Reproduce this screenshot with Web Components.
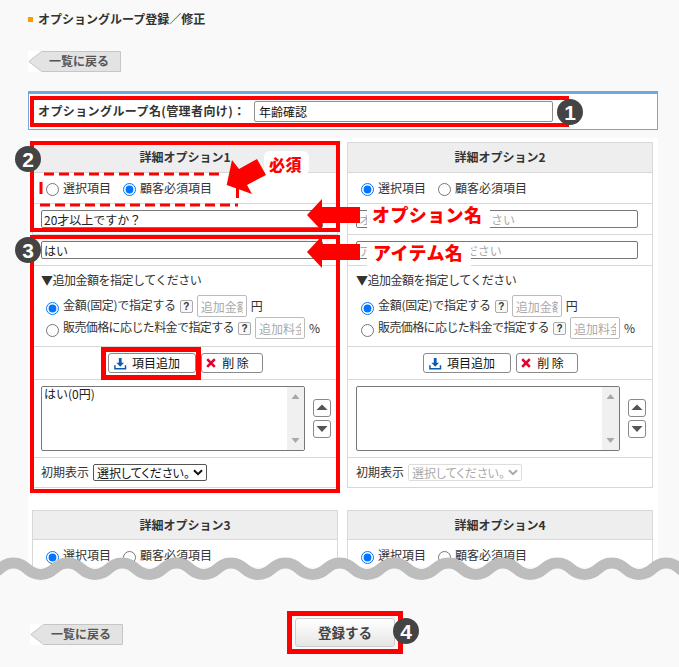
<!DOCTYPE html>
<html lang="ja">
<head>
<meta charset="utf-8">
<title>オプショングループ登録／修正</title>
<style>
  html, body { margin: 0; padding: 0; background: #f9f9f9; }
  body { font: 12px/1.2 "Noto Sans CJK JP", "Liberation Sans", sans-serif; color: #333; }
</style>
</head>
<body>
<x-page>
  <x-title>オプショングループ登録／修正</x-title>
  <x-back>一覧に戻る</x-back>
  <x-namebox label="オプショングループ名(管理者向け)：" value="年齢確認"></x-namebox>
  <x-panel>
    <x-card n="1" mode="required" option="20才以上ですか？" item="はい" list="はい(0円)" enabled></x-card>
    <x-card n="2" ph-option="オプション名を入力ください" ph-item="アイテム名を入力ください"></x-card>
    <x-card n="3" compact></x-card>
    <x-card n="4" compact></x-card>
  </x-panel>
  <x-footer>
    <x-back slot="back">一覧に戻る</x-back>
    <x-submit>登録する</x-submit>
  </x-footer>
  <x-notes></x-notes>
</x-page>
<script>
function define(name, css, html, init) {
  customElements.define(name, class extends HTMLElement {
    connectedCallback() {
      if (this.shadowRoot) return;
      const root = this.attachShadow({ mode: 'open' });
      const a = k => (this.getAttribute(k) || '');
      root.innerHTML = '<style>' + css + '</style>' + (typeof html === 'function' ? html(a, this) : html);
      if (init) init(root, this);
    }
  });
}

define('x-page', `
  :host { display:block; position:relative; width:679px; height:667px; overflow:hidden; box-sizing:border-box; padding-left:28px; }
`, '<slot></slot>');

define('x-title', `
  :host { display:flex; align-items:center; gap:5px; height:39px; width:630px; font-weight:bold; font-size:12px; color:#333; }
  i { width:5px; height:5px; background:#f90; display:block; }
`, '<i></i><slot></slot>');

define('x-back', `
  :host { display:grid; width:93px; height:21px; margin-top:12px; color:#555; font-weight:bold; font-size:12px; }
  svg, span { grid-area:1/1; }
  svg { display:block; }
  span { display:flex; align-items:center; padding-left:21px; }
`, `<svg width="93" height="21" viewBox="0 0 93 21"><rect width="14" height="21" fill="#fff"/><path d="M.8 10.5 13.5.5H92.5v20H13.5z" fill="#e3e3e3" stroke="#c6c6c6"/></svg><span><slot></slot></span>`);

define('x-namebox', `
  :host { display:flex; align-items:center; box-sizing:border-box; width:630px; height:39px; margin-top:19px; padding-left:9px; background:#fff; border:1px solid #6fa8dc; border-top-width:3px; }
  b { width:216px; font-size:12px; color:#333; white-space:nowrap; letter-spacing:.4px; }
  input { box-sizing:border-box; width:299px; height:21px; margin:0; padding:1px 4px; font:inherit; font-size:12px; color:#111; border:1px solid #8f8f8f; border-radius:2px; background:#fff; outline:0; }
`, a => `<b>${a('label')}</b><input value="${a('value')}">`);

define('x-panel', `
  :host { display:grid; grid-template-columns:306px 306px; grid-auto-rows:max-content; column-gap:9px; row-gap:22px; box-sizing:border-box; width:630px; height:429px; margin-top:8px; padding:4px 0 0 4px; background:#fff; overflow:hidden; align-content:start; }
`, '<slot></slot>');

const icoDown = `<svg width="13" height="13" viewBox="0 0 14 14"><path d="M5.2 1h3v5.2h2.6L6.7 10.6 2.6 6.2h2.6z" fill="#0b5cad"/><path d="M1 9v3.6h11.4V9" fill="none" stroke="#0b5cad" stroke-width="1.6"/></svg>`;
const icoX = `<svg width="10" height="10" viewBox="0 0 10 10"><path d="M1.2 1.2l7.6 7.6M8.8 1.2 1.2 8.8" stroke="#e6002d" stroke-width="2.6"/></svg>`;

define('x-card', `
  :host { display:block; box-sizing:border-box; width:306px; border:1px solid #d8d8d8; background:#fff; font-size:12px; color:#333; }
  * { box-sizing:border-box; }
  .row { border-bottom:1px solid #d8d8d8; display:flex; align-items:center; padding:0 8px; }
  .row:last-child { border-bottom:0; }
  .head { height:30px; justify-content:center; background:#eee; font-weight:bold; color:#333; }
  :host([compact]) .head { height:29px; }
  .kind { height:31px; padding-left:13px; }
  .kind label { display:flex; align-items:center; gap:4px; margin-right:12px; width:65px; white-space:nowrap; }
  .kind label + label { width:auto; }
  input[type=radio] { width:13px; height:13px; margin:0; flex:none; position:relative; top:2px; }
  .txt { height:31px; }
  .txt input, .fee input:not([type=radio]) { font:inherit; font-size:12px; margin:0; outline:0; background:#fff; }
  .txt input { width:282px; height:18px; padding:0 2px; color:#222; border:1px solid #777; border-radius:2px; }
  .txt input::placeholder, .fee input::placeholder { color:#aaa; opacity:1; }
  .price { display:block; height:81px; padding:5px 8px 0; }
  .price p { margin:0 0 7px; height:17px; line-height:17px; letter-spacing:-.5px; white-space:nowrap; }
  .fee { display:flex; align-items:center; height:22px; padding-left:5px; white-space:nowrap; }
  .fee span.t { margin-left:4px; position:relative; top:-1px; letter-spacing:-.3px; }
  .fee span.wide { letter-spacing:-.6px; }
  .fee i { display:block; flex:none; width:13px; height:13px; margin:0 4px; border:1px solid #aaa; border-radius:2px; font:bold 10px/11px "Liberation Sans", sans-serif; text-align:center; color:#333; background:#f8f8f8; font-style:normal; }
  .fee input:not([type=radio]) { flex:none; width:50px; height:22px; padding:0 3px; border:1px solid #bbb; border-radius:2px; margin-right:4px; }
  .btns { height:33px; justify-content:center; gap:5px; padding:0; }
  button { display:flex; align-items:center; justify-content:center; height:20px; margin:0; padding:0; font:inherit; font-size:12px; color:#111; background:#fff; border:1px solid #8a8a8a; border-right-width:1.5px; border-bottom-width:1.5px; border-radius:3px; }
  .add { width:88px; gap:5px; padding-right:9px; }
  .del { width:62px; gap:6px; padding-right:8px; }
  .lists { height:78px; gap:8px; }
  .list { flex:none; width:264px; height:65px; border:1px solid #777; border-radius:2px; display:flex; overflow:hidden; background:#fff; }
  .list div { flex:1; padding:0 2px; line-height:13px; color:#222; }
  .list svg { display:block; flex:none; background:#f0f0f0; }
  .ud { display:flex; flex-direction:column; gap:3px; }
  .ud button { width:18px; height:18px; }
  .def { height:29px; gap:3px; }
  .sel { display:grid; width:114px; height:17px; margin-left:1px; }
  .sel select, .sel svg { grid-area:1/1; }
  .sel svg { justify-self:end; align-self:center; margin-right:4px; pointer-events:none; }
  select { appearance:none; -webkit-appearance:none; width:114px; height:17px; margin:0; padding:0 14px 0 3px; font:inherit; font-size:12px; line-height:15px; font-feature-settings:"palt"; color:#111; background:#fff; border:1px solid #555; border-radius:2px; }
  select:disabled { color:#aaa; border-color:#ddd; opacity:1; }
`, (a, el) => {
  const n = a('n'), req = a('mode') === 'required', g = 'k' + n, on = el.hasAttribute('enabled');
  const kind = `<div class="row kind">
      <label><input type="radio" name="${g}" ${req ? '' : 'checked'}>選択項目</label>
      <label><input type="radio" name="${g}" ${req ? 'checked' : ''}>顧客必須項目</label></div>`;
  const head = `<div class="row head">詳細オプション${n}</div>`;
  if (el.hasAttribute('compact')) return head + kind;
  return head + kind + `
    <div class="row txt"><input value="${a('option')}" placeholder="${a('ph-option')}"></div>
    <div class="row txt"><input value="${a('item')}" placeholder="${a('ph-item')}"></div>
    <div class="row price">
      <p>▼追加金額を指定してください</p>
      <div class="fee"><input type="radio" name="f${n}" checked><span class="t">金額(固定)で指定する</span><i>?</i><input placeholder="追加金額">円</div>
      <div class="fee"><input type="radio" name="f${n}"><span class="t wide">販売価格に応じた料金で指定する</span><i>?</i><input placeholder="追加料金">%</div>
    </div>
    <div class="row btns"><button class="add">${icoDown}項目追加</button><button class="del">${icoX}削 除</button></div>
    <div class="row lists">
      <div class="list"><div>${a('list')}</div><svg width="17" height="63" viewBox="0 0 17 63"><path d="M8.5 7 12.5 12h-8zM8.5 56 12.5 51h-8z" fill="#a8a8a8"/></svg></div>
      <div class="ud">
        <button><svg width="12" height="8" viewBox="0 0 12 8"><path d="M6 .5 11.5 6H.5z" fill="#555"/></svg></button>
        <button><svg width="12" height="8" viewBox="0 0 12 8"><path d="M.5 1h11L6 7z" fill="#555"/></svg></button>
      </div>
    </div>
    <div class="row def">初期表示 <span class="sel"><select ${on ? '' : 'disabled'}><option>選択してください。</option></select><svg width="10" height="7" viewBox="0 0 10 7"><path d="M1 1.2 5 5.2 9 1.2" fill="none" stroke="${on ? '#111' : '#aaa'}" stroke-width="2"/></svg></span></div>`;
});

define('x-footer', `
  :host { display:flex; align-items:center; width:630px; height:29px; margin-top:51px; }
  ::slotted([slot=back]) { margin:4px 0 0 2px; }
  .m { display:block; margin-left:172px; }
`, '<slot name="back"></slot><span class="m"><slot></slot></span>');

define('x-submit', `
  :host { display:flex; align-items:center; justify-content:center; box-sizing:border-box; width:100px; height:29px; color:#444; font-weight:bold; font-size:13.5px; border:1px solid #ccc; border-radius:3px; background:linear-gradient(#fff,#e6e6e6); }
`, '<slot></slot>');

define('x-notes', `
  :host { display:block; position:absolute; left:0; top:0; width:679px; height:667px; pointer-events:none; }
  svg { display:block; }
  .lab { font:900 18px "Noto Sans CJK JP", sans-serif; fill:#f00; letter-spacing:.4px; }
  .num { font:bold 21px "Liberation Sans", sans-serif; fill:#fff; text-anchor:middle; }
`, () => {
  let line = 'M-41 563', x = -41, up = true;
  while (x < 700) {
    const y = up ? 574.5 : 563;
    const p = up ? 563 : 574.5;
    line += ` C${x + 13.6} ${p} ${x + 13.6} ${y} ${x + 27.2} ${y}`;
    x += 27.2; up = !up;
  }
  const badge = (cx, cy, t) => `<circle cx="${cx}" cy="${cy}" r="13" fill="#444"/><text class="num" x="${cx}" y="${cy + 7.5}">${t}</text>`;
  const box = (x, y, w, h, s) => `<rect x="${x + s/2}" y="${y + s/2}" width="${w - s}" height="${h - s}" fill="none" stroke="#f00" stroke-width="${s}"/>`;
  return `<svg width="679" height="667" viewBox="0 0 679 667">
    <path d="${line} L${x} 592 L-41 592Z" fill="#f9f9f9"/>
    <path d="${line}" fill="none" stroke="#bdbdbd" stroke-width="11"/>
    ${box(30,96,539,31,4)}
    ${box(30,141,310,91,4)}
    ${box(30,235,310,258,4)}
    ${box(101,347,100,33,5)}
    ${box(287,611,116,43,5)}
    <g stroke="#f00" stroke-width="3" fill="none" stroke-dasharray="10 5">
      <path d="M44 174H224"/><path d="M40 205H238"/>
    </g>
    <path d="M41 182V194" stroke="#f00" stroke-width="3"/>
    <path d="M226.7 185 232 160 239 169 257 159 266 175 247 185 252 194Z" fill="#f00"/>
    <path d="M237.5 183V198" stroke="#f00" stroke-width="3"/>
    <rect x="264" y="151" width="45" height="24" rx="6" fill="#fff"/>
    <text class="lab" x="269" y="171" style="font-size:16px">必須</text>
    <path d="M307 215 322 199V207H360V223H322V231Z" fill="#f00"/>
    <path d="M307 252 322 236V244H360V260H322V268Z" fill="#f00"/>
    <rect x="367" y="204" width="123" height="28" rx="5" fill="#fff"/>
    <rect x="367" y="242" width="104" height="28" rx="5" fill="#fff"/>
    <text class="lab" x="372" y="222">オプション名</text>
    <text class="lab" x="373" y="260">アイテム名</text>
    ${badge(570,112,'1')}${badge(28,159,'2')}${badge(28,250,'3')}${badge(406,631,'4')}
  </svg>`;
});
</script>
</body>
</html>
